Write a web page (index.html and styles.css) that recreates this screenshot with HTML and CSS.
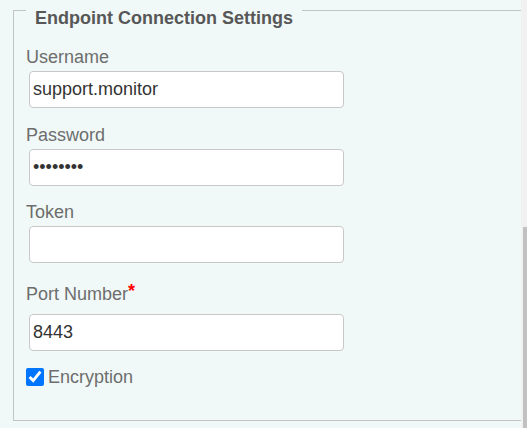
FILE: index.html
```html
<!DOCTYPE html>
<html lang="en">
<head>
<meta charset="utf-8">
<title>Endpoint Connection Settings</title>
<link rel="stylesheet" href="styles.css">
</head>
<body>
<div class="page">
  <main class="main">
    <section class="group">
      <div class="group-head">
        <span class="rule rule-start"></span>
        <h2 class="group-title">Endpoint Connection Settings</h2>
        <span class="rule rule-end"></span>
      </div>
      <div class="group-body">
        <div class="field">
          <label class="field-label" for="username">Username</label>
          <input class="field-input" id="username" type="text" value="support.monitor">
        </div>
        <div class="field">
          <label class="field-label" for="password">Password</label>
          <input class="field-input" id="password" type="password" value="secret12">
        </div>
        <div class="field">
          <label class="field-label" for="token">Token</label>
          <input class="field-input" id="token" type="text" value="">
        </div>
        <div class="field field-req">
          <label class="field-label" for="port">Port Number<span class="req">*</span></label>
          <input class="field-input" id="port" type="text" value="8443">
        </div>
        <label class="check">
          <input class="check-box" type="checkbox" checked>
          <span>Encryption</span>
        </label>
      </div>
    </section>
  </main>
  <div class="scrollbar"><div class="scroll-thumb"></div></div>
</div>
</body>
</html>
```

FILE: styles.css
```css
html, body {
  margin: 0;
  height: 100%;
}

body {
  background: #f0f9f8;
  font-family: "Liberation Sans", Arial, sans-serif;
  overflow: hidden;
}

.page {
  display: flex;
  height: 428px;
}

.main {
  flex: 0 0 521px;
  padding-top: 10px;
  box-sizing: border-box;
}

.group {
  margin-left: 13px;
  border-left: 1px solid #c4c4c4;
  border-bottom: 1px solid #c4c4c4;
}

.group-head {
  display: flex;
  align-items: flex-start;
}

.rule {
  height: 0;
  border-top: 1px solid #c4c4c4;
}

.rule-start {
  width: 12px;
}

.rule-end {
  flex: 1;
}

.group-title {
  margin: 0;
  padding: 0 9px;
  font-size: 18px;
  font-weight: bold;
  line-height: 17px;
  color: #575757;
}

.group-body {
  display: flex;
  flex-direction: column;
  gap: 16.5px;
  padding: 20px 0 32px 12px;
}

.field {
  display: flex;
  flex-direction: column;
  align-items: flex-start;
}

.field-label {
  font-size: 18px;
  line-height: 21px;
  color: #6d6d6d;
  margin-bottom: 3px;
}

.field-req .field-label {
  padding-top: 4px;
  margin-bottom: 9px;
}

.req {
  color: #f00;
  font-weight: bold;
  line-height: 0;
  vertical-align: 3px;
}

.field-input {
  box-sizing: border-box;
  width: 315px;
  height: 37px;
  margin: 0 0 0 3px;
  padding: 0 3px;
  font: 18px "Liberation Sans", Arial, sans-serif;
  color: #333;
  background: #fff;
  border: 1px solid #c8c8c8;
  border-radius: 4px;
  outline: none;
}

.check {
  display: flex;
  align-items: flex-start;
  gap: 4px;
  font-size: 18px;
  line-height: 21px;
  color: #6d6d6d;
}

.check-box {
  width: 18px;
  height: 18px;
  margin: 1px 0 0 0;
  accent-color: #0075ff;
}

.scrollbar {
  flex: 1;
  display: flex;
  flex-direction: column;
  box-sizing: border-box;
  padding: 227px 0 0 2px;
  background: #f1f1f1;
}

.scroll-thumb {
  flex: 1;
  background: #c1c1c1;
}
```
